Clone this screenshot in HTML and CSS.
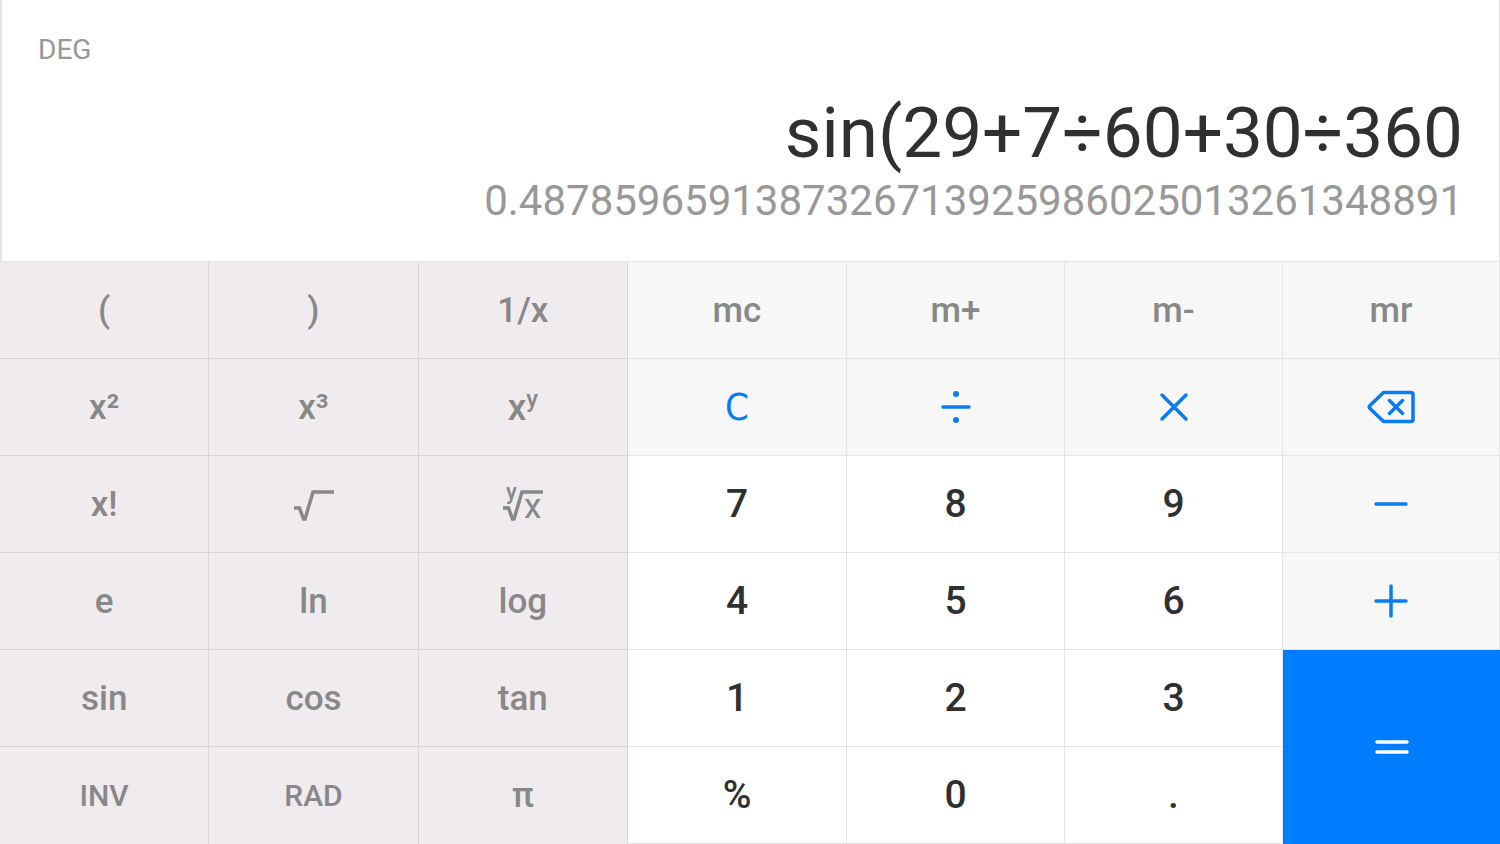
FILE: index.html
```
<!DOCTYPE html>
<html lang="en">
<head>
  <meta charset="UTF-8">
  <meta name="viewport" content="width=device-width, initial-scale=1.0">
  <title>Calculator</title>
  <link rel="stylesheet" href="styles.css">
</head>
<body>

<div class="display">
  <div class="mode">DEG</div>
  <output class="expression">sin(29+7÷60+30÷360</output>
  <output class="result">0.4878596591387326713925986025013261348891</output>
</div>

<div class="keypad">
  <div class="functions">
    <button type="button">(</button>
    <button type="button">)</button>
    <button type="button">1/x</button>

    <button type="button">x²</button>
    <button type="button">x³</button>
    <button type="button"><span class="power">x<sup>y</sup></span></button>

    <button type="button">x!</button>
    <button type="button" aria-label="square root">
      <svg width="42" height="60" viewBox="0 0 42 60"><path d="M2 34h5.500l4 11h1.500L21 18h21"/></svg>
    </button>
    <button type="button" aria-label="y-th root of x">
      <svg width="42" height="60" viewBox="0 0 42 60">
        <path d="M1 34h5.500l4 11h1.500L20 18h21"/>
        <text class="index" x="4" y="25">y</text>
        <text class="radicand" x="22" y="44">x</text>
      </svg>
    </button>

    <button type="button">e</button>
    <button type="button">ln</button>
    <button type="button">log</button>

    <button type="button">sin</button>
    <button type="button">cos</button>
    <button type="button">tan</button>

    <button type="button" class="small">INV</button>
    <button type="button" class="small">RAD</button>
    <button type="button">π</button>
  </div>

  <div class="numbers">
    <button type="button" class="memory">mc</button>
    <button type="button" class="memory">m+</button>
    <button type="button" class="memory">m-</button>
    <button type="button" class="memory">mr</button>

    <button type="button" class="operator clear">C</button>
    <button type="button" class="operator" aria-label="divide">
      <svg width="34" height="34" viewBox="0 0 34 34"><path d="M4 17h26"/><circle cx="17" cy="4" r="3"/><circle cx="17" cy="30" r="3"/></svg>
    </button>
    <button type="button" class="operator" aria-label="multiply">
      <svg width="34" height="34" viewBox="0 0 34 34"><path d="M5 5l24 24M29 5L5 29"/></svg>
    </button>
    <button type="button" class="operator" aria-label="backspace">
      <svg width="48" height="34" viewBox="0 0 48 34"><path d="M16.500 2.500H44a2 2 0 0 1 2 2v25a2 2 0 0 1-2 2H16.500L3 18.500q-1.500-1.500 0-3zM22.500 10.500l13 13M35.500 10.500l-13 13"/></svg>
    </button>

    <button type="button">7</button>
    <button type="button">8</button>
    <button type="button">9</button>
    <button type="button" class="operator" aria-label="subtract">
      <svg width="34" height="34" viewBox="0 0 34 34"><path d="M2 17h30"/></svg>
    </button>

    <button type="button">4</button>
    <button type="button">5</button>
    <button type="button">6</button>
    <button type="button" class="operator" aria-label="add">
      <svg width="34" height="34" viewBox="0 0 34 34"><path d="M2 17h30M17 2v30"/></svg>
    </button>

    <button type="button">1</button>
    <button type="button">2</button>
    <button type="button">3</button>
    <button type="button" class="equals" aria-label="equals">
      <svg width="34" height="34" viewBox="0 0 34 34"><path d="M2 12h30M2 22h30"/></svg>
    </button>

    <button type="button">%</button>
    <button type="button">0</button>
    <button type="button">.</button>
  </div>
</div>

</body>
</html>
```
FILE: styles.css
```
* { box-sizing:border-box; margin:0; padding:0; }

body { display:flex; flex-direction:column; min-height:100vh; background:#fff; font-family:Roboto, sans-serif; }

.display { display:flex; flex-direction:column; padding:33px 36px 35px; border:solid #e4e4e4; border-width:0 1px 1px 2px; }
.display output { text-align:right; }

.mode { color:#989898; font-size:28px; line-height:34px; }
.expression { margin-top:24px; color:#303030; font-size:71px; line-height:84px; }
.result { color:#989898; font-size:42px; line-height:51px; }

.keypad { display:flex; flex:1; }
.functions, .numbers { display:grid; grid-template-rows:repeat(6, 1fr); }
.functions { flex:628 0 0; grid-template-columns:repeat(3, 1fr); }
.numbers { flex:872 0 0; grid-template-columns:219fr 218fr 218fr 217fr; }

button { display:flex; align-items:center; justify-content:center; border:solid #e4e4e4; border-width:0 1px 1px 0; background:#fff; color:#303030; font-family:inherit; font-size:39px; font-weight:500; }

.functions button { border-color:#d6d4d6; background:#efebee; color:#888; font-size:35px; }
.functions button:nth-last-child(-n+3) { border-bottom:0; }
.functions .small { font-size:30px; }
.power { font-size:37px; }
.power sup { font-size:24px; line-height:0; }

.numbers .memory { background:#f7f7f7; color:#888; font-size:35px; }
.numbers .operator { background:#f7f7f7; color:#087cf0; }
.numbers .clear { font-family:"DejaVu Sans Condensed", "DejaVu Sans", sans-serif; font-size:38px; font-weight:400; }
.numbers .equals { grid-row:span 2; border:0; background:#007dff; color:#fff; }

svg { fill:none; stroke:currentColor; stroke-width:3.500; stroke-linecap:round; stroke-linejoin:round; }
svg circle { fill:currentColor; stroke:none; }
svg text { fill:currentColor; stroke:none; }
.functions svg { stroke-linecap:butt; stroke-linejoin:miter; }
.index { font-size:22px; }
.radicand { font-size:35px; font-weight:400; }
```
